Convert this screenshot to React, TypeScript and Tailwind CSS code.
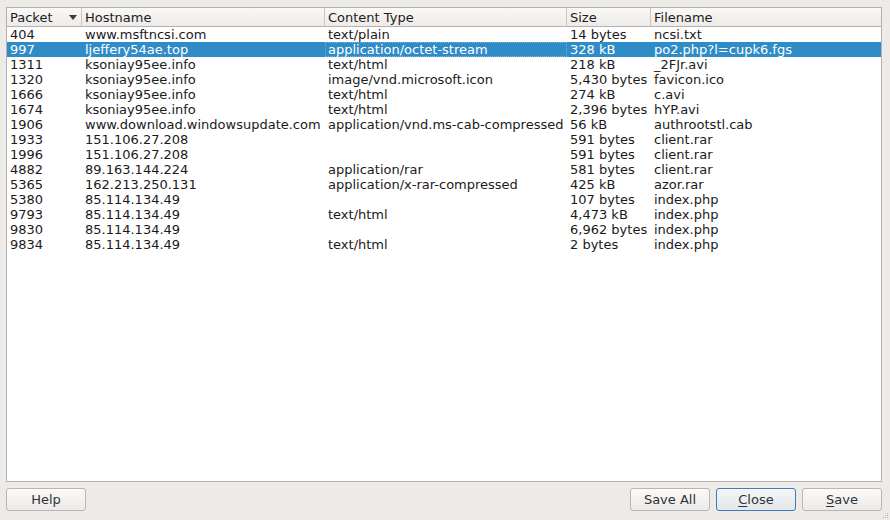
import React from "react";

const rows = [
  ["404", "www.msftncsi.com", "text/plain", "14 bytes", "ncsi.txt"],
  ["997", "ljeffery54ae.top", "application/octet-stream", "328 kB", "po2.php?l=cupk6.fgs"],
  ["1311", "ksoniay95ee.info", "text/html", "218 kB", "_2FJr.avi"],
  ["1320", "ksoniay95ee.info", "image/vnd.microsoft.icon", "5,430 bytes", "favicon.ico"],
  ["1666", "ksoniay95ee.info", "text/html", "274 kB", "c.avi"],
  ["1674", "ksoniay95ee.info", "text/html", "2,396 bytes", "hYP.avi"],
  ["1906", "www.download.windowsupdate.com", "application/vnd.ms-cab-compressed", "56 kB", "authrootstl.cab"],
  ["1933", "151.106.27.208", "", "591 bytes", "client.rar"],
  ["1996", "151.106.27.208", "", "591 bytes", "client.rar"],
  ["4882", "89.163.144.224", "application/rar", "581 bytes", "client.rar"],
  ["5365", "162.213.250.131", "application/x-rar-compressed", "425 kB", "azor.rar"],
  ["5380", "85.114.134.49", "", "107 bytes", "index.php"],
  ["9793", "85.114.134.49", "text/html", "4,473 kB", "index.php"],
  ["9830", "85.114.134.49", "", "6,962 bytes", "index.php"],
  ["9834", "85.114.134.49", "text/html", "2 bytes", "index.php"],
];

const cols = [
  { label: "Packet", w: "w-[75px]" },
  { label: "Hostname", w: "w-[243px]" },
  { label: "Content Type", w: "w-[242px]" },
  { label: "Size", w: "w-[84px]" },
  { label: "Filename", w: "flex-1" },
];

function Btn({ children, focus }: { children: React.ReactNode; focus?: boolean }) {
  return (
    <button
      className={
        "w-[80px] h-[23px] rounded-[3px] border text-[13px] text-[#2e3436] bg-gradient-to-b " +
        (focus
          ? "border-[#3d7db9] from-[#f4f6f8] to-[#e3e7ea]"
          : "border-[#b8b5b2] from-[#fbfaf9] to-[#eceae8]")
      }
    >
      {children}
    </button>
  );
}

export default function App() {
  return (
    <div
      className="w-[890px] h-[520px] bg-[#edebe7] flex flex-col pl-[6px] pr-[8px] pt-[7px] relative"
      style={{ fontFamily: '"DejaVu Sans", sans-serif' }}
    >
      <div className="h-[475px] border border-[#b4b1ae] bg-white flex flex-col overflow-hidden">
        <div className="flex h-[19px] border-b border-[#b4b1ae] bg-gradient-to-b from-[#faf9f8] to-[#edeae7] text-[13px] text-[#1c1c1c]">
          {cols.map((c, i) => (
            <div
              key={c.label}
              className={
                c.w +
                " flex items-center pl-[3px] pt-[2px] leading-[16px] " +
                (i < cols.length - 1 ? "border-r border-[#c9c6c2]" : "")
              }
            >
              <span className="flex-1">{c.label}</span>
              {i === 0 && (
                <svg width="8" height="5" viewBox="0 0 8 5" className="mr-[4px] -mt-[2px]">
                  <path d="M0 0 H8 L4 5 Z" fill="#3a3a3a" />
                </svg>
              )}
            </div>
          ))}
        </div>
        <div className="flex flex-col text-[13px] text-[#1a1a1a]">
          {rows.map((r, ri) => {
            const sel = ri === 1;
            return (
              <div
                key={r[0]}
                className={"flex h-[15px] leading-[15px] " + (sel ? "bg-[#308cc6] text-white" : "")}
              >
                {r.map((v, ci) => (
                  <div
                    key={ci}
                    className={
                      cols[ci].w +
                      " pl-[3px] whitespace-nowrap overflow-hidden " +
                      (sel && ci === 2 ? "outline outline-1 outline-dotted outline-[#7fb2db] -outline-offset-1" : "")
                    }
                  >
                    {v}
                  </div>
                ))}
              </div>
            );
          })}
        </div>
      </div>
      <div className="flex items-center mt-[6px]">
        <Btn>Help</Btn>
        <div className="flex-1" />
        <div className="flex gap-[6px]">
          <Btn>Save All</Btn>
          <Btn focus>
            <span className="underline underline-offset-2">C</span>lose
          </Btn>
          <Btn>
            <span className="underline underline-offset-2">S</span>ave
          </Btn>
        </div>
      </div>
      <svg width="6" height="6" viewBox="0 0 6 6" className="absolute right-[1px] bottom-[1px]">
        <rect x="4" y="0" width="1" height="1" fill="#b5b2ae" />
        <rect x="2" y="2" width="1" height="1" fill="#b5b2ae" />
        <rect x="4" y="2" width="1" height="1" fill="#b5b2ae" />
        <rect x="0" y="4" width="1" height="1" fill="#b5b2ae" />
        <rect x="2" y="4" width="1" height="1" fill="#b5b2ae" />
        <rect x="4" y="4" width="1" height="1" fill="#b5b2ae" />
      </svg>
    </div>
  );
}
